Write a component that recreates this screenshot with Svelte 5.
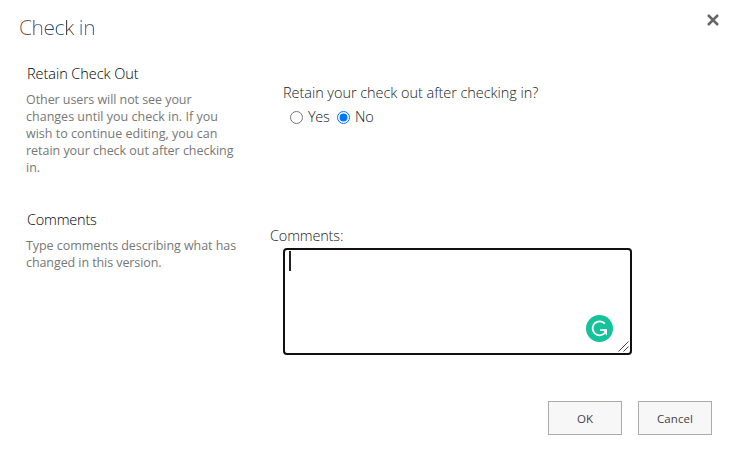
<script>
  let retain = $state('no');
</script>

<div class="dialog">
  <header>
    <h1>Check in</h1>
    <button class="close" aria-label="Close">
      <svg width="12" height="12" viewBox="0 0 12 12"><path d="M1 1L11 11M11 1L1 11" stroke="#666" stroke-width="2.5" /></svg>
    </button>
  </header>

  <section class="retain">
    <div class="info">
      <h2 class="rt">Retain Check Out</h2>
      <p>
        <span class="a">Other users will not see your</span>
        <span class="b">changes until you check in. If you</span>
        <span class="c">wish to continue editing, you can</span>
        <span class="d">retain your check out after checking</span>
        <span>in.</span>
      </p>
    </div>
    <div class="field">
      <div class="question">Retain your check out after checking in?</div>
      <div class="choices">
        <label class="yes"><input type="radio" name="retain" value="yes" bind:group={retain} /><span>Yes</span></label>
        <label class="no"><input type="radio" name="retain" value="no" bind:group={retain} /><span>No</span></label>
      </div>
    </div>
  </section>

  <section class="comments">
    <div class="info">
      <h2 class="ct">Comments</h2>
      <p>
        <span class="e">Type comments describing what has</span>
        <span class="f">changed in this version.</span>
      </p>
    </div>
    <div class="field">
      <div class="label">Comments:</div>
      <div class="editor">
        <i class="caret"></i>
        <svg class="badge" width="28" height="28" viewBox="0 0 28 28">
          <circle cx="14.5" cy="14.5" r="13.5" fill="#15c39a" />
          <path d="M19.8 9.6A7 7 0 1 0 19.4 19.4M15 16.2H20.9" fill="none" stroke="#fff" stroke-width="1.8" />
          <path d="M17.6 15.3H22V21.6L20.2 19.8L17.6 20.6L19.4 18.2Z" fill="#fff" />
        </svg>
        <svg class="grip" width="11" height="11" viewBox="0 0 11 11"><path d="M0.5 10.5L10.5 0.5M5.5 10.5L10.5 5.5" stroke="#444" stroke-width="1" /></svg>
      </div>
    </div>
  </section>

  <footer>
    <button class="ok">OK</button>
    <button class="cancel">Cancel</button>
  </footer>
</div>

<style>
  :global(body) { margin: 0; background: #fff; }
  .dialog { width: 730px; height: 455px; box-sizing: border-box; overflow: hidden; display: flex; flex-direction: column; background: #fff; color: #222; font-family: "Open Sans", "Noto Sans", sans-serif; font-weight: 350; white-space: nowrap; }
  header { height: 64px; flex: none; display: flex; justify-content: space-between; box-sizing: border-box; padding: 12px 11px 0 19px; }
  h1 { margin: 0; font-size: 21px; line-height: 30px; font-weight: 300; letter-spacing: -0.45px; color: transparent; background: linear-gradient(90deg, #a8500c 0, #a8500c 5%, #3c4858 14%, #2b5c88 24%, #8a5a30 32%, #303a56 42%, #0f5c98 52%, #333 62%, #a05a15 72%, #0064b4 79%, #906030 86%, #0064b4 100%); background-clip: text; -webkit-background-clip: text; align-self: flex-start; }
  .close { border: 0; padding: 0; background: none; width: 12px; height: 12px; margin-top: 2px; }
  .close svg { display: block; }
  section { display: flex; flex: none; }
  .retain { height: 146px; }
  .comments { height: 191px; }
  .info { width: 244px; padding-left: 26px; flex: none; }
  h2 { margin: 0 0 0 1px; font-size: 14.5px; line-height: 20px; font-weight: 350; color: #000; }
  .rt { letter-spacing: -0.05px; }
  .ct { letter-spacing: -0.2px; }
  p { margin: 7px 0 0; font-size: 12.5px; line-height: 17px; font-weight: 400; color: #777; }
  p span { display: block; width: max-content; }
  .a, .e { letter-spacing: -0.06px; }
  .b, .c { letter-spacing: 0.01px; }
  .d { letter-spacing: -0.03px; }
  .f { letter-spacing: -0.08px; }
  .question { margin: 19px 0 0 13px; font-size: 14.5px; line-height: 20px; letter-spacing: -0.05px; }
  .choices { display: flex; margin: 4px 0 0 20px; font-size: 14.5px; line-height: 20px; letter-spacing: -0.3px; }
  label { display: flex; width: 47px; }
  input { width: 13px; height: 13px; margin: 4px 5px 0 0; accent-color: #0075ff; flex: none; }
  .label { margin-top: 16px; font-size: 14.5px; line-height: 20px; letter-spacing: -0.17px; }
  .editor { position: relative; box-sizing: border-box; width: 349px; height: 107px; margin: 2px 0 0 13px; border: 2px solid #101010; border-radius: 4px; }
  .caret { position: absolute; left: 4px; top: 1px; width: 2px; height: 20px; background: #222; }
  .badge { position: absolute; left: 300px; top: 64px; }
  .grip { position: absolute; right: 1px; bottom: 1px; }
  footer { display: flex; justify-content: flex-end; gap: 16px; padding-right: 18px; }
  footer button { box-sizing: border-box; width: 74px; height: 34px; padding: 1px 0 0; border: 1px solid #ababab; background: #f7f7f7; color: #444; font: 400 11.5px "Open Sans", sans-serif; }
  .cancel { letter-spacing: 0.1px; }
</style>
